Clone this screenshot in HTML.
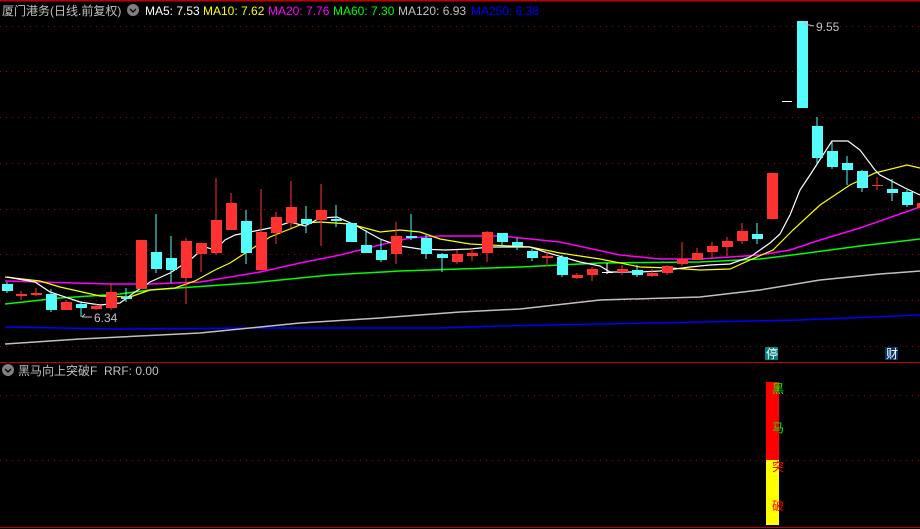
<!DOCTYPE html>
<html><head><meta charset="utf-8"><style>
body{margin:0;background:#000;width:920px;height:529px;overflow:hidden;font-family:"Liberation Sans","Noto Sans CJK SC",sans-serif}
svg{display:block}
</style></head><body>
<svg width="920" height="529" xmlns="http://www.w3.org/2000/svg" font-family="Liberation Sans, Noto Sans CJK SC, sans-serif">
<rect width="920" height="529" fill="#000"/>
<line x1="0" y1="0.5" x2="920" y2="0.5" stroke="#c00000" stroke-width="2"/>
<g stroke="#a00000" stroke-dasharray="1,5" stroke-width="1">
<line x1="0" y1="26.5" x2="920" y2="26.5"/><line x1="0" y1="71.5" x2="920" y2="71.5"/>
<line x1="0" y1="117.5" x2="920" y2="117.5"/><line x1="0" y1="163.5" x2="920" y2="163.5"/>
<line x1="0" y1="209.5" x2="920" y2="209.5"/><line x1="0" y1="254.5" x2="920" y2="254.5"/>
<line x1="0" y1="300.5" x2="920" y2="300.5"/><line x1="0" y1="346.5" x2="920" y2="346.5"/>
<line x1="0" y1="395.5" x2="920" y2="395.5"/><line x1="0" y1="460.5" x2="920" y2="460.5"/>
</g>
<line x1="0" y1="362.5" x2="920" y2="362.5" stroke="#c00000" stroke-width="1"/>
<line x1="0" y1="527.5" x2="920" y2="527.5" stroke="#c00000" stroke-width="1"/>
<g fill="none" stroke-width="1.2">
<polyline stroke="#0000ff" stroke-width="1.5" points="5,327 60,328 120,329 260,328 440,328 500,326 600,324 700,322 800,320 920,315"/>
<polyline stroke="#c0c0c0" stroke-width="1.5" points="5,344 80,339 200,333 300,323 380,318 460,312 520,309 600,300 700,297 760,290 820,280 880,274 920,271"/>
<polyline stroke="#00ff00" stroke-width="1.5" points="5,304 60,298 120,294 150,290 250,283 330,275 400,271 460,269 520,267 600,263 700,262 760,259 800,254 860,246 920,239"/>
<polyline stroke="#ff00ff" stroke-width="1.5" points="5,281 40,282 110,284 150,284 200,282 260,272 300,263 340,255 380,245 410,238 440,236 500,236 560,242 620,255 660,259 700,259 760,255 790,250 820,240 860,228 900,214 920,207"/>
<polyline stroke="#ffff00" points="5,277 40,281 60,287 100,296 130,297 150,290 175,288 195,281 215,270 230,263 250,250 270,237 285,231 305,223 320,222 350,224 380,232 400,230 420,232 440,239 470,244 530,247 560,253 600,259 640,267 670,268 700,270 730,269 750,260 773,250 793,230 820,205 850,185 875,173 907,165 920,168"/>
<polyline stroke="#ffffff" points="7,277 35,282 50,292 80,302 100,305 120,303 135,292 150,282 170,273 190,260 205,247 215,250 225,240 235,235 255,231 275,227 290,222 305,226 320,218 337,217 355,225 380,239 400,246 420,249 445,250 470,249 490,247 530,247 545,252 580,262 600,266 610,272 640,272 660,271 690,267 710,265 730,264 750,257 770,243 780,234 790,215 800,190 810,175 832,141 848,141 860,150 875,170 880,175 905,188 920,195"/>
</g>
<g stroke-width="1">
<line x1="7" y1="282" x2="7" y2="293" stroke="#54fcfc"/><rect x="2" y="284" width="11" height="7" fill="#54fcfc"/>
<line x1="21" y1="291" x2="21" y2="300" stroke="#ff3232"/><rect x="16" y="294" width="11" height="2" fill="#ff3232"/>
<line x1="36" y1="288" x2="36" y2="296" stroke="#ff3232"/><rect x="31" y="293" width="11" height="2" fill="#ff3232"/>
<line x1="51" y1="289" x2="51" y2="312" stroke="#54fcfc"/><rect x="46" y="294" width="11" height="16" fill="#54fcfc"/>
<line x1="66" y1="300" x2="66" y2="310" stroke="#ff3232"/><rect x="61" y="302" width="11" height="8" fill="#ff3232"/>
<line x1="81" y1="301" x2="81" y2="317" stroke="#54fcfc"/><rect x="76" y="304" width="11" height="4" fill="#54fcfc"/>
<line x1="96" y1="304" x2="96" y2="310" stroke="#ff3232"/><rect x="91" y="306" width="11" height="3" fill="#ff3232"/>
<line x1="111" y1="284" x2="111" y2="310" stroke="#ff3232"/><rect x="106" y="292" width="11" height="16" fill="#ff3232"/>
<line x1="126" y1="288" x2="126" y2="302" stroke="#54fcfc"/><rect x="121" y="297" width="11" height="2" fill="#54fcfc"/>
<rect x="136" y="240" width="11" height="49" fill="#ff3232"/>
<line x1="156" y1="214" x2="156" y2="273" stroke="#54fcfc"/><rect x="151" y="252" width="11" height="17" fill="#54fcfc"/>
<line x1="171" y1="236" x2="171" y2="283" stroke="#54fcfc"/><rect x="166" y="258" width="11" height="12" fill="#54fcfc"/>
<line x1="186" y1="238" x2="186" y2="304" stroke="#ff3232"/><rect x="181" y="241" width="11" height="37" fill="#ff3232"/>
<line x1="201" y1="243" x2="201" y2="272" stroke="#ff3232"/><rect x="196" y="243" width="11" height="11" fill="#ff3232"/>
<line x1="216" y1="178" x2="216" y2="255" stroke="#ff3232"/><rect x="211" y="220" width="11" height="33" fill="#ff3232"/>
<line x1="231" y1="193" x2="231" y2="230" stroke="#ff3232"/><rect x="226" y="203" width="11" height="27" fill="#ff3232"/>
<line x1="246" y1="210" x2="246" y2="264" stroke="#54fcfc"/><rect x="241" y="221" width="11" height="32" fill="#54fcfc"/>
<line x1="261" y1="189" x2="261" y2="270" stroke="#ff3232"/><rect x="256" y="232" width="11" height="38" fill="#ff3232"/>
<line x1="276" y1="212" x2="276" y2="244" stroke="#ff3232"/><rect x="271" y="217" width="11" height="16" fill="#ff3232"/>
<line x1="291" y1="181" x2="291" y2="228" stroke="#ff3232"/><rect x="286" y="207" width="11" height="16" fill="#ff3232"/>
<line x1="306" y1="206" x2="306" y2="233" stroke="#54fcfc"/><rect x="301" y="219" width="11" height="5" fill="#54fcfc"/>
<line x1="321" y1="184" x2="321" y2="246" stroke="#ff3232"/><rect x="316" y="210" width="11" height="10" fill="#ff3232"/>
<line x1="336" y1="205" x2="336" y2="227" stroke="#54fcfc"/><rect x="331" y="219" width="11" height="2" fill="#54fcfc"/>
<rect x="346" y="223" width="11" height="19" fill="#54fcfc"/>
<line x1="366" y1="230" x2="366" y2="253" stroke="#54fcfc"/><rect x="361" y="245" width="11" height="8" fill="#54fcfc"/>
<line x1="381" y1="239" x2="381" y2="262" stroke="#54fcfc"/><rect x="376" y="250" width="11" height="10" fill="#54fcfc"/>
<line x1="396" y1="222" x2="396" y2="264" stroke="#ff3232"/><rect x="391" y="236" width="11" height="18" fill="#ff3232"/>
<line x1="411" y1="214" x2="411" y2="240" stroke="#54fcfc"/><rect x="406" y="236" width="11" height="2" fill="#54fcfc"/>
<line x1="426" y1="235" x2="426" y2="259" stroke="#54fcfc"/><rect x="421" y="238" width="11" height="16" fill="#54fcfc"/>
<line x1="442" y1="253" x2="442" y2="272" stroke="#54fcfc"/><rect x="437" y="254" width="11" height="4" fill="#54fcfc"/>
<line x1="457" y1="250" x2="457" y2="264" stroke="#ff3232"/><rect x="452" y="254" width="11" height="8" fill="#ff3232"/>
<line x1="472" y1="248" x2="472" y2="261" stroke="#ff3232"/><rect x="467" y="253" width="11" height="3" fill="#ff3232"/>
<line x1="487" y1="231" x2="487" y2="262" stroke="#ff3232"/><rect x="482" y="232" width="11" height="21" fill="#ff3232"/>
<line x1="502" y1="233" x2="502" y2="247" stroke="#54fcfc"/><rect x="497" y="233" width="11" height="9" fill="#54fcfc"/>
<line x1="517" y1="238" x2="517" y2="250" stroke="#54fcfc"/><rect x="512" y="242" width="11" height="4" fill="#54fcfc"/>
<line x1="532" y1="249" x2="532" y2="261" stroke="#54fcfc"/><rect x="527" y="251" width="11" height="7" fill="#54fcfc"/>
<line x1="547" y1="252" x2="547" y2="266" stroke="#ff3232"/><rect x="542" y="256" width="11" height="2" fill="#ff3232"/>
<line x1="562" y1="255" x2="562" y2="277" stroke="#54fcfc"/><rect x="557" y="257" width="11" height="18" fill="#54fcfc"/>
<line x1="577" y1="273" x2="577" y2="279" stroke="#ff3232"/><rect x="572" y="275" width="11" height="3" fill="#ff3232"/>
<line x1="592" y1="267" x2="592" y2="281" stroke="#ff3232"/><rect x="587" y="269" width="11" height="6" fill="#ff3232"/>
<line x1="607" y1="263" x2="607" y2="274" stroke="#fff"/><rect x="602" y="272" width="11" height="1" fill="#fff"/>
<line x1="622" y1="265" x2="622" y2="275" stroke="#ff3232"/><rect x="617" y="269" width="11" height="3" fill="#ff3232"/>
<line x1="637" y1="265" x2="637" y2="277" stroke="#54fcfc"/><rect x="632" y="270" width="11" height="5" fill="#54fcfc"/>
<line x1="652" y1="269" x2="652" y2="277" stroke="#ff3232"/><rect x="647" y="273" width="11" height="3" fill="#ff3232"/>
<line x1="667" y1="265" x2="667" y2="275" stroke="#ff3232"/><rect x="662" y="266" width="11" height="7" fill="#ff3232"/>
<line x1="682" y1="242" x2="682" y2="266" stroke="#ff3232"/><rect x="677" y="259" width="11" height="5" fill="#ff3232"/>
<line x1="697" y1="248" x2="697" y2="260" stroke="#ff3232"/><rect x="692" y="253" width="11" height="7" fill="#ff3232"/>
<line x1="712" y1="242" x2="712" y2="259" stroke="#ff3232"/><rect x="707" y="246" width="11" height="6" fill="#ff3232"/>
<line x1="727" y1="237" x2="727" y2="256" stroke="#ff3232"/><rect x="722" y="241" width="11" height="6" fill="#ff3232"/>
<line x1="742" y1="223" x2="742" y2="244" stroke="#ff3232"/><rect x="737" y="231" width="11" height="10" fill="#ff3232"/>
<line x1="757" y1="223" x2="757" y2="244" stroke="#54fcfc"/><rect x="752" y="234" width="11" height="5" fill="#54fcfc"/>
<rect x="767" y="173" width="11" height="46" fill="#ff3232"/>
<rect x="797" y="21" width="11" height="87" fill="#54fcfc"/>
<line x1="782" y1="101.5" x2="792" y2="101.5" stroke="#fff"/>
<line x1="817" y1="117" x2="817" y2="164" stroke="#54fcfc"/><rect x="812" y="126" width="11" height="32" fill="#54fcfc"/>
<line x1="832" y1="142" x2="832" y2="169" stroke="#54fcfc"/><rect x="827" y="151" width="11" height="16" fill="#54fcfc"/>
<line x1="847" y1="156" x2="847" y2="185" stroke="#54fcfc"/><rect x="842" y="163" width="11" height="7" fill="#54fcfc"/>
<line x1="862" y1="170" x2="862" y2="192" stroke="#54fcfc"/><rect x="857" y="171" width="11" height="17" fill="#54fcfc"/>
<line x1="877" y1="177" x2="877" y2="190" stroke="#ff3232"/><rect x="872" y="185" width="11" height="1" fill="#ff3232"/>
<line x1="892" y1="179" x2="892" y2="201" stroke="#54fcfc"/><rect x="887" y="189" width="11" height="4" fill="#54fcfc"/>
<line x1="907" y1="190" x2="907" y2="207" stroke="#54fcfc"/><rect x="902" y="192" width="11" height="13" fill="#54fcfc"/>
<rect x="917" y="203" width="3" height="5" fill="#ff3232"/>
</g>
<g fill="#c0c0c0" font-size="12">
<text x="816" y="31">9.55</text>
<text x="94" y="322">6.34</text>
</g>
<path d="M804 24 L814 26 M804 24 L807 21" stroke="#c0c0c0" fill="none"/>
<path d="M82 317 L92 317 M82 317 L85 314" stroke="#c0c0c0" fill="none"/>
<g font-size="12">
<text x="2" y="15" fill="#c0c0c0">厦门港务(日线.前复权)</text>
<circle cx="133" cy="10" r="6" fill="#808080"/><path d="M130 9 L133 12 L136 9" stroke="#000" stroke-width="1.3" fill="none"/>
<text x="145" y="15" fill="#fff">MA5: 7.53</text>
<text x="203" y="15" fill="#ffff00">MA10: 7.62</text>
<text x="268" y="15" fill="#ff00ff">MA20: 7.76</text>
<text x="333" y="15" fill="#00ff00">MA60: 7.30</text>
<text x="398" y="15" fill="#c0c0c0">MA120: 6.93</text>
<text x="471" y="15" fill="#0000ff">MA250: 6.38</text>
</g>
<rect x="765" y="347" width="13" height="13" fill="#008080"/><text x="766" y="358" font-size="12" fill="#fff">停</text>
<rect x="885" y="347" width="13" height="13" fill="#003366"/><text x="886" y="358" font-size="12" fill="#fff">财</text>
<g font-size="12">
<circle cx="8" cy="370" r="6" fill="#808080"/><path d="M5 369 L8 372 L11 369" stroke="#000" stroke-width="1.3" fill="none"/>
<text x="18" y="375" fill="#c0c0c0" xml:space="preserve">黑马向上突破F  RRF: 0.00</text>
</g>
<rect x="766" y="382" width="13" height="78" fill="#ff0000"/>
<rect x="766" y="460" width="13" height="65" fill="#ffff00"/>
<g font-size="12">
<text x="772" y="393" fill="#00ff00">黑</text>
<text x="772" y="432" fill="#00ff00">马</text>
<text x="772" y="471" fill="#ff0000">突</text>
<text x="772" y="510" fill="#ff0000">破</text>
</g>
</svg>
</body></html>
